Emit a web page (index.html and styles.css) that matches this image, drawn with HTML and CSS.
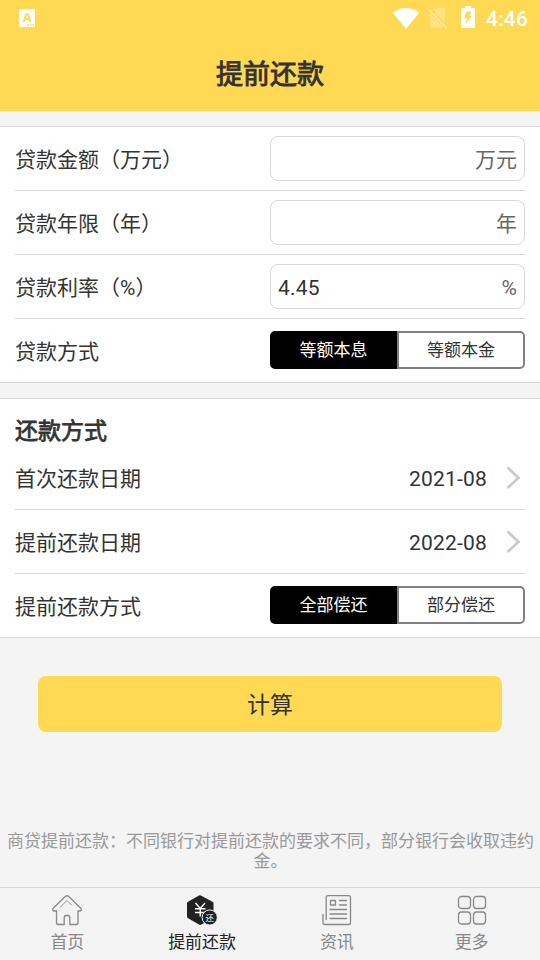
FILE: index.html
```html
<!DOCTYPE html>
<html lang="zh-CN">
<head>
<meta charset="utf-8">
<title>提前还款</title>
<link rel="stylesheet" href="styles.css">
</head>
<body>
<div class="app">
  <header class="header">
    <div class="status">
      <svg class="status-app" width="16" height="18" viewBox="0 0 16 18"><rect width="16" height="18" rx="1.2" fill="#fff"/><path d="M4.5 13L7.2 5.2H8.8L11.5 13M5.6 10.3H10.4" fill="none" stroke="#ffd954" stroke-width="2"/><path d="M8 16H15" stroke="#ffd954" stroke-width="1.6" stroke-dasharray="2 .6"/></svg>
      <div class="status-right">
        <svg width="26" height="21" viewBox="0 0 26 21"><path d="M0 5C7.5-1.6 18.5-1.6 26 5L13 21Z" fill="#fff"/></svg>
        <svg class="sim" width="20" height="21" viewBox="0 0 20 21"><path d="M6 0H15.500Q17 0 17 1.500V15.500L4.500 2.300Z M2 5.500L15.500 19.500H3.500Q2 19.500 2 18Z" fill="#fff" opacity=".28"/><path d="M.5 1.500L18.500 20" stroke="#fff" stroke-width="1.400" opacity=".5"/></svg>
        <svg class="battery" width="14" height="22" viewBox="0 0 14 22"><path d="M4 0H10V2H13Q14 2 14 3V21Q14 22 13 22H1Q0 22 0 21V3Q0 2 1 2H4Z" fill="#fff"/><path d="M5 5.500H10L8.500 10H10.500L4.500 18.500L6 12.500H3.500Z" fill="#ffd954"/></svg>
        <span class="clock">4:46</span>
      </div>
    </div>
    <h1 class="title">提前还款</h1>
  </header>

  <main class="content">
    <section class="card">
      <div class="row"><span class="label">贷款金额（万元）</span><div class="field"><span></span><span class="unit">万元</span></div></div>
      <div class="row"><span class="label">贷款年限（年）</span><div class="field"><span></span><span class="unit">年</span></div></div>
      <div class="row"><span class="label">贷款利率（%）</span><div class="field"><span class="value">4.45</span><span class="unit">%</span></div></div>
      <div class="row"><span class="label">贷款方式</span><div class="segment"><span class="option active">等额本息</span><span class="option">等额本金</span></div></div>
    </section>

    <section class="card">
      <h2 class="card-title">还款方式</h2>
      <div class="row"><span class="label">首次还款日期</span><div class="date"><span class="value">2021-08</span><svg width="16" height="26" viewBox="0 0 16 26"><path d="M2.500 2.500L13.500 12.700L2.500 23" class="chevron"/></svg></div></div>
      <div class="row"><span class="label">提前还款日期</span><div class="date"><span class="value">2022-08</span><svg width="16" height="26" viewBox="0 0 16 26"><path d="M2.500 2.500L13.500 12.700L2.500 23" class="chevron"/></svg></div></div>
      <div class="row"><span class="label">提前还款方式</span><div class="segment"><span class="option active">全部偿还</span><span class="option">部分偿还</span></div></div>
    </section>

    <div class="submit">计算</div>
    <p class="note">商贷提前还款：不同银行对提前还款的要求不同，部分银行会收取违约金。</p>
  </main>

  <nav class="tabs">
    <div class="tab">
      <svg width="32" height="32" viewBox="0 0 32 32" class="line"><path d="M5 17H3.200Q1 16.500 2 14.500L14.500 2.300Q16 1.200 17.500 2.300L30 14.500Q31 16.500 28.800 17H27V28.500Q27 30.500 25 30.500H18.800V24Q18.800 21.500 17 21.500H15Q13.200 21.500 13.200 24V30.500H7.500Q5.500 30.500 5.500 28.500V17Z"/><path d="M9 13.300L16 6.500L20.500 11" stroke-width=".9"/></svg>
      <span>首页</span>
    </div>
    <div class="tab current">
      <svg width="32" height="32" viewBox="0 0 32 32"><path d="M14.300 1.200L26.500 7.800Q27.500 8.300 27.500 9.500V22.500Q27.500 23.700 26.500 24.200L15.500 30.600Q14.200 31.300 13 30.600L2 24.200Q1 23.700 1 22.500V9.500Q1 8.300 2 7.800L13 1.500Q13.700 1 14.300 1.200Z" fill="#222"/><path d="M9.500 9L14.200 14.500L19 9M14.200 14.500V22.500M9 14.800H19.500M9 18.500H19.500" fill="none" stroke="#fff" stroke-width="1.400"/><circle cx="23.700" cy="23.500" r="7.600" fill="#222" stroke="#f3f3f3"/><text x="23.700" y="26.600" text-anchor="middle" class="badge-text">还</text></svg>
      <span>提前还款</span>
    </div>
    <div class="tab">
      <svg width="32" height="32" viewBox="0 0 32 32" class="line"><path d="M2 20.500V28.500Q2 30.500 4 30.500H27.500Q29.500 30.500 29.500 28.500V3.500Q29.500 1.700 27.500 1.700H7Q5.200 1.700 5.200 3.500V25.500"/><path d="M9.500 6.500H14.500V11H9.500ZM18.500 6.500H25.500M18.500 11H25.500M9 15.500H25.500M9 20H25.500M9 24.500H25.500"/></svg>
      <span>资讯</span>
    </div>
    <div class="tab">
      <svg width="32" height="32" viewBox="0 0 32 32" class="line"><rect x="2.500" y="2.500" width="12" height="12" rx="3"/><rect x="17.500" y="2.500" width="12" height="12" rx="3"/><rect x="2.500" y="18" width="12" height="12" rx="3"/><rect x="17.500" y="18" width="12" height="12" rx="3"/></svg>
      <span>更多</span>
    </div>
  </nav>
</div>
</body>
</html>
```
FILE: styles.css
```css
* { box-sizing: border-box; }
body {
  margin: 0;
  background: #f4f4f4;
  color: #333;
  font-family: Roboto, "Noto Sans CJK SC", sans-serif;
  font-size: 21px;
}
svg { display: block; flex: none; }
.app { display: flex; flex-direction: column; height: 960px; overflow: hidden; }
.header { height: 111px; background: #ffd954; flex: none; }
.status { display: flex; justify-content: space-between; align-items: center; height: 36px; padding: 0 12px 0 19px; }
.status-right { display: flex; align-items: center; height: 36px; color: #fff; }
.sim { margin-left: 9px; }
.battery { margin: -2px 11px 0 13px; }
.clock { width: 42px; font-size: 21px; font-weight: 500; letter-spacing: .2px; line-height: 24px; padding-top: 2px; }
.title { margin: 0; font-size: 27px; font-weight: 400; -webkit-text-stroke: .9px #333; line-height: 78px; text-align: center; }
.content { flex: 1; padding-top: 15px; }
.card {
  background: #fff;
  border-top: 1px solid #d9d9d9;
  border-bottom: 1px solid #d9d9d9;
  padding: 0 15px;
  margin-bottom: 15px;
}
.card-title { margin: 0; height: 47px; font-size: 23px; line-height: 66px; font-weight: 400; -webkit-text-stroke: .8px #333; }
.row { height: 64px; display: flex; justify-content: space-between; align-items: center; border-bottom: 1px solid #d9d9d9; line-height: 30px; }
.row:last-child { height: 63px; border-bottom: 0; }
.label, .unit, .value { padding-top: 2px; }
.value { letter-spacing: .2px; }
.field {
  width: 255px;
  height: 45px;
  display: flex;
  justify-content: space-between;
  align-items: center;
  padding: 0 7px;
  border: 1px solid #d9d9d9;
  border-radius: 8px;
}
.unit { color: #666; }
.segment { display: flex; width: 255px; height: 38px; margin-bottom: 1px; font-size: 17px; line-height: 35px; text-align: center; }
.option { width: 128px; border: 2px solid #808080; border-radius: 0 5px 5px 0; }
.option.active { width: 127px; background: #000; color: #fff; border-color: #000; border-radius: 5px 0 0 5px; }
.date { display: flex; align-items: center; gap: 18px; padding-right: 4px; }
.chevron { fill: none; stroke: #c7c7cc; stroke-width: 2.6; }
.submit { margin: 38px 38px 0; height: 56px; border-radius: 8px; background: #ffd954; font-size: 23px; line-height: 59px; text-align: center; }
.note { margin: 99px 0 0; padding: 0 5px 0 6px; font-size: 17px; line-height: 20px; text-align: center; color: #999; }
.tabs { display: flex; height: 73px; flex: none; border-top: 1px solid #d9d9d9; background: #f3f3f3; padding-right: 1px; }
.tab { flex: 1; display: flex; flex-direction: column; align-items: center; padding-top: 6px; font-size: 17px; line-height: 32px; color: #888; }
.tab.current { color: #222; }
.line { fill: none; stroke: #888; stroke-width: 1.3; stroke-linejoin: round; stroke-linecap: round; }
.badge-text { font-size: 8.5px; fill: #fff; }
```
